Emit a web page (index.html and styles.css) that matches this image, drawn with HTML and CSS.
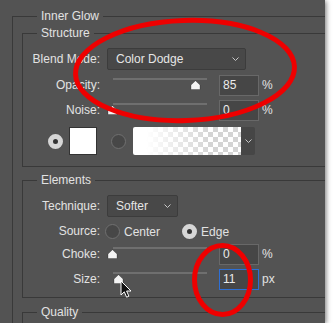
FILE: index.html
```html
<!DOCTYPE html>
<html lang="en">
<head>
  <meta charset="UTF-8">
  <title>Inner Glow</title>
  <link rel="stylesheet" href="styles.css">
</head>
<body>

  <div class="panel">
    <fieldset class="group outer">
      <legend>Inner Glow</legend>

      <fieldset class="group structure">
        <legend>Structure</legend>

        <div class="row blend-row">
          <span class="label">Blend Mode:</span>
          <div class="select blend-select">
            <span>Color Dodge</span>
            <svg class="chevron" width="7" height="4" viewBox="0 0 7 4"><path d="M0.5 0.5 L3.5 3.5 L6.5 0.5" /></svg>
          </div>
        </div>

        <div class="row slider-row opacity-row">
          <span class="label">Opacity:</span>
          <div class="slider">
            <div class="track"></div>
            <svg class="thumb" style="left: 83px" width="11" height="10" viewBox="0 0 11 10"><path d="M1 9.5 V5 L5.5 0.7 L10 5 V9.5 Z" /></svg>
          </div>
          <div class="num">85</div>
          <span class="unit">%</span>
        </div>

        <div class="row slider-row noise-row">
          <span class="label">Noise:</span>
          <div class="slider">
            <div class="track"></div>
            <svg class="thumb" style="left: 0px" width="11" height="10" viewBox="0 0 11 10"><path d="M1 9.5 V5 L5.5 0.7 L10 5 V9.5 Z" /></svg>
          </div>
          <div class="num">0</div>
          <span class="unit">%</span>
        </div>

        <div class="row swatch-row">
          <span class="radio checked"></span>
          <div class="swatch"></div>
          <span class="radio"></span>
          <div class="gradient"></div>
          <div class="gradient-arrow">
            <svg class="chevron" width="7" height="4" viewBox="0 0 7 4"><path d="M0.5 0.5 L3.5 3.5 L6.5 0.5" /></svg>
          </div>
        </div>
      </fieldset>

      <fieldset class="group elements">
        <legend>Elements</legend>

        <div class="row technique-row">
          <span class="label">Technique:</span>
          <div class="select technique-select">
            <span>Softer</span>
            <svg class="chevron" width="7" height="4" viewBox="0 0 7 4"><path d="M0.5 0.5 L3.5 3.5 L6.5 0.5" /></svg>
          </div>
        </div>

        <div class="row source-row">
          <span class="label">Source:</span>
          <span class="radio first"></span>
          <span class="option">Center</span>
          <span class="radio checked"></span>
          <span class="option">Edge</span>
        </div>

        <div class="row slider-row choke-row">
          <span class="label">Choke:</span>
          <div class="slider">
            <div class="track"></div>
            <svg class="thumb" style="left: 0px" width="11" height="10" viewBox="0 0 11 10"><path d="M1 9.5 V5 L5.5 0.7 L10 5 V9.5 Z" /></svg>
          </div>
          <div class="num">0</div>
          <span class="unit">%</span>
        </div>

        <div class="row slider-row size-row">
          <span class="label">Size:</span>
          <div class="slider">
            <div class="track"></div>
            <svg class="thumb" style="left: 6px" width="11" height="10" viewBox="0 0 11 10"><path d="M1 9.5 V5 L5.5 0.7 L10 5 V9.5 Z" /></svg>
          </div>
          <div class="num active">11</div>
          <span class="unit">px</span>
        </div>
      </fieldset>

      <fieldset class="group quality">
        <legend>Quality</legend>
      </fieldset>
    </fieldset>

    <!-- cursor over the Size slider -->
    <svg class="cursor" width="12" height="19" viewBox="0 0 12 19">
      <path d="M1 1 L1 15 L4.3 11.8 L6.6 17.2 L8.9 16.2 L6.6 11 L11 11 Z" />
    </svg>

    <!-- red annotation marks -->
    <svg class="marks" width="325" height="323" viewBox="0 0 325 323">
      <ellipse cx="185" cy="70.5" rx="109.5" ry="50" transform="rotate(-2 185 70.5)" />
      <ellipse cx="222.5" cy="280" rx="28" ry="34.5" />
    </svg>
  </div>

</body>
</html>
```

FILE: styles.css
```css
body {
  margin: 0;
  background-color: white;
  font-family: "Liberation Sans", Arial, sans-serif;
  font-size: 12px;
  color: #e2e2e2;
}

.panel {
  position: relative;
  width: 325px;
  height: 323px;
  box-sizing: border-box;
  padding: 9px 0 0 12px;
  background-color: #535353;
  overflow: hidden;
  box-shadow: 1px 1px 5px rgba(0, 0, 0, 0.55);
}

.group {
  margin: 0;
  padding: 0;
  min-inline-size: 0;
  border: 1px solid #393939;
  border-right: none;
}

.group > legend {
  margin-left: 14px;
  padding: 0 4px;
  line-height: 14px;
}

.outer {
  width: 400px;
  height: 420px;
  box-sizing: border-box;
  padding: 3px 0 0 9px;
  border-bottom: none;
}

.outer > legend {
  margin-left: 15px;
}

.structure {
  padding-bottom: 11px;
}

.elements {
  margin-top: 6px;
  padding-bottom: 7px;
}

.quality {
  margin-top: 7px;
  height: 60px;
}

.row {
  display: flex;
  align-items: flex-start;
}

.label {
  width: 77px;
  margin-right: 7px;
  text-align: right;
  line-height: 21px;
}

.blend-row {
  margin-top: 8px;
}

.blend-row .label, .technique-row .label {
  line-height: 22px;
}

.select {
  height: 22px;
  box-sizing: border-box;
  display: flex;
  align-items: center;
  justify-content: space-between;
  padding: 0 6px 0 8px;
  background-color: #484848;
  border: 1px solid #3c3c3c;
  border-radius: 2px;
  color: #e6e6e6;
}

.blend-select {
  width: 139px;
}

.technique-select {
  width: 71px;
}

.chevron path {
  fill: none;
  stroke: #c8c8c8;
  stroke-width: 1;
}

.opacity-row {
  margin-top: 5px;
}

.noise-row {
  margin-top: 4px;
}

.slider {
  position: relative;
  width: 100px;
  height: 21px;
  margin-right: 12px;
}

.track {
  height: 2px;
  margin: 3px 0 0 6px;
  background-color: #6f6f6f;
}

.thumb {
  position: absolute;
  top: 5px;
}

.thumb path {
  fill: #f3f3f3;
  stroke: rgba(0, 0, 0, 0.35);
  stroke-width: 0.7;
}

.num {
  width: 40px;
  height: 21px;
  box-sizing: border-box;
  padding-left: 3px;
  line-height: 19px;
  background-color: #464646;
  border: 1px solid #686868;
  color: #ececec;
}

.num.active {
  border-color: #2d6fd6;
}

.unit {
  margin-left: 3px;
  line-height: 21px;
}

.swatch-row {
  margin-top: 6px;
  margin-left: 25px;
  align-items: center;
}

.radio {
  width: 15px;
  height: 15px;
  box-sizing: border-box;
  border-radius: 50%;
  border: 1px solid #707070;
  background-color: #474747;
}

.radio.checked {
  border: 5px solid #d6d6d6;
  background-color: #333;
}

.swatch {
  width: 28px;
  height: 28px;
  box-sizing: border-box;
  margin: 0 14px 0 6px;
  background-color: white;
  border: 1px solid #333;
}

.gradient {
  width: 108px;
  height: 28px;
  margin-left: 7px;
  border-radius: 2px 0 0 2px;
  background:
    linear-gradient(to right, #fff 0%, #fff 12%, rgba(255, 255, 255, 0) 72%),
    repeating-conic-gradient(#fff 0 25%, #d4d4d4 0 50%) 0 0 / 10px 10px;
}

.gradient-arrow {
  width: 14px;
  height: 28px;
  display: flex;
  align-items: center;
  justify-content: center;
  background-color: #464646;
  border-radius: 0 2px 2px 0;
}

.technique-row {
  margin-top: 8px;
}

.source-row {
  margin-top: 4px;
  align-items: center;
  height: 21px;
}

.source-row .radio.first {
  margin-left: -2px;
}

.option {
  margin-left: 4px;
  margin-right: 22px;
}

.choke-row {
  margin-top: 2px;
}

.size-row {
  margin-top: 4px;
}

.cursor {
  position: absolute;
  left: 120px;
  top: 280px;
}

.cursor path {
  fill: #111;
  stroke: white;
  stroke-width: 1;
  stroke-linejoin: round;
}

.marks {
  position: absolute;
  left: 0;
  top: 0;
}

.marks ellipse {
  fill: none;
  stroke: #ee0000;
  stroke-width: 5;
}
```
